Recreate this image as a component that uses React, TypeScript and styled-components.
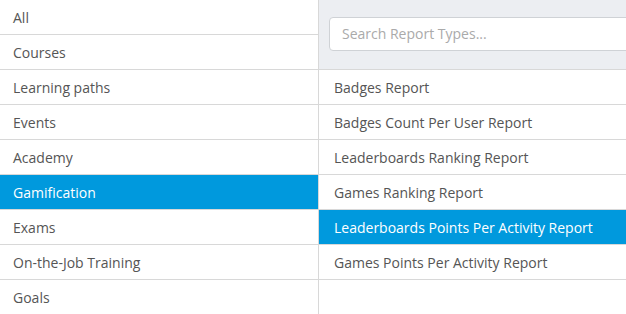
import React from "react";
import styled, { createGlobalStyle } from "styled-components";

const GlobalStyle = createGlobalStyle`
  html, body {
    margin: 0;
    padding: 0;
    background: #fff;
  }
  body {
    font-family: "Open Sans", "Liberation Sans", sans-serif;
    overflow: hidden;
  }
`;

const categories = [
  "All",
  "Courses",
  "Learning paths",
  "Events",
  "Academy",
  "Gamification",
  "Exams",
  "On-the-Job Training",
  "Goals",
];

const reports = [
  "Badges Report",
  "Badges Count Per User Report",
  "Leaderboards Ranking Report",
  "Games Ranking Report",
  "Leaderboards Points Per Activity Report",
  "Games Points Per Activity Report",
];

const Layout = styled.div`
  display: flex;
  width: 626px;
  height: 314px;
  overflow: hidden;
`;

const CategoryColumn = styled.div`
  width: 318px;
  flex-shrink: 0;
  border-right: 1px solid #d8d8d8;
  display: flex;
  flex-direction: column;
`;

const ReportColumn = styled.div`
  flex: 1;
  min-width: 0;
  display: flex;
  flex-direction: column;
  overflow: hidden;
`;

const Row = styled.div<{ $active?: boolean; $pad: number }>`
  height: 34px;
  flex-shrink: 0;
  display: flex;
  align-items: center;
  padding-left: ${({ $pad }) => $pad}px;
  border-bottom: 1px solid #d8d8d8;
  font-size: 14px;
  color: ${({ $active }) => ($active ? "#fff" : "#555")};
  background: ${({ $active }) => ($active ? "#0099dd" : "#fff")};
  white-space: nowrap;
  cursor: pointer;
`;

const SearchBar = styled.div`
  height: 69px;
  flex-shrink: 0;
  background: #eceef2;
  border-bottom: 1px solid #d8d8d8;
  display: flex;
  align-items: center;
  padding-left: 10px;
`;

const SearchInput = styled.input`
  width: 330px;
  flex-shrink: 0;
  height: 34px;
  box-sizing: border-box;
  border: 1px solid #cfd2d6;
  border-radius: 4px;
  background: #fff;
  padding: 0 12px;
  font-family: "Open Sans", "Liberation Sans", sans-serif;
  font-size: 14px;
  color: #555;
  outline: none;
  margin-top: -2px;

  &::placeholder {
    color: #aaa;
  }
`;

export default function App() {
  return (
    <>
      <GlobalStyle />
      <Layout>
        <CategoryColumn>
          {categories.map((c) => (
            <Row key={c} $pad={13} $active={c === "Gamification"}>
              {c}
            </Row>
          ))}
        </CategoryColumn>
        <ReportColumn>
          <SearchBar>
            <SearchInput placeholder="Search Report Types..." />
          </SearchBar>
          {reports.map((r) => (
            <Row
              key={r}
              $pad={15}
              $active={r === "Leaderboards Points Per Activity Report"}
            >
              {r}
            </Row>
          ))}
        </ReportColumn>
      </Layout>
    </>
  );
}
